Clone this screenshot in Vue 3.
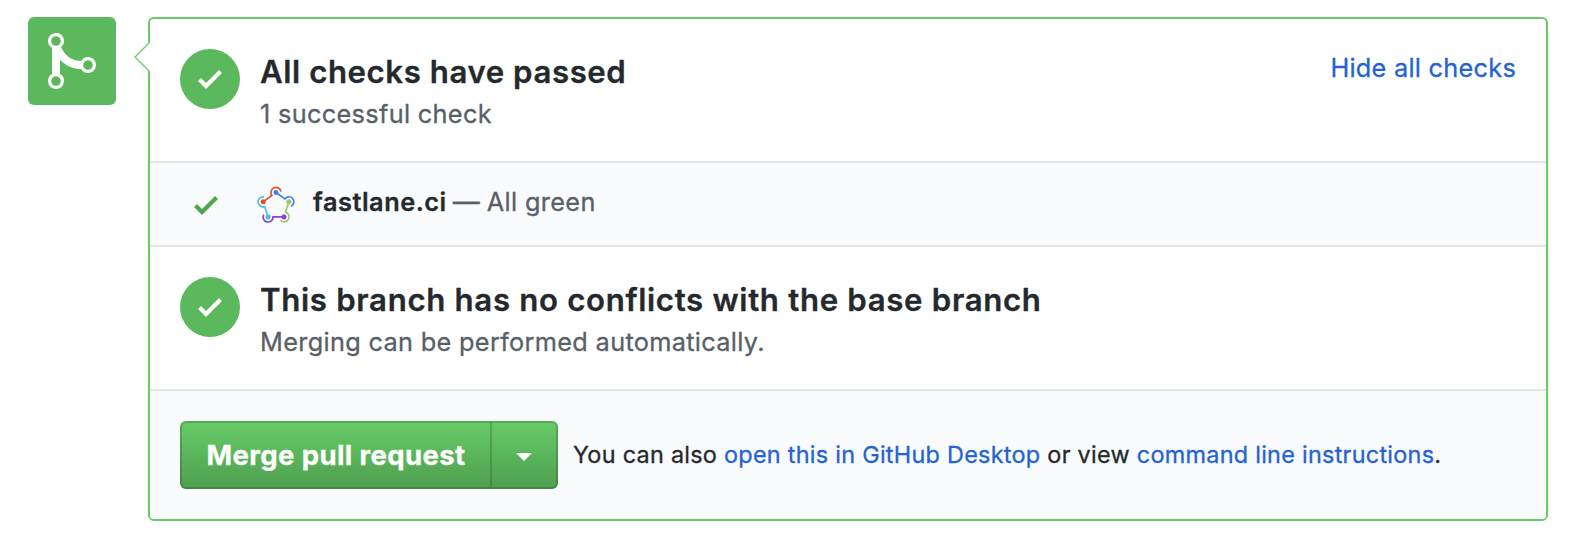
<script setup>
const checkPath = 'M12 5l-8 8-4-4 1.5-1.5L4 10l6.5-6.5z'
const strands = [
  { color: '#e04e2c', angle: 0 },
  { color: '#3b82f6', angle: 72 },
  { color: '#9cca68', angle: 144 },
  { color: '#8b40e2', angle: 216 },
  { color: '#55bdd8', angle: 288 },
]
</script>

<template>
  <main class="page">
    <div class="badge">
      <svg width="48" height="64" viewBox="0 0 12 16" fill="#fff">
        <path fill-rule="evenodd" d="M10 7c-.73 0-1.38.41-1.73 1.02V8C7.22 7.98 6 7.64 5.14 6.98c-.75-.58-1.5-1.61-1.89-2.44A1.993 1.993 0 0 0 2 .99C.89.99 0 1.89 0 3a2 2 0 0 0 1 1.72v6.56c-.59.35-1 .99-1 1.72 0 1.11.89 2 2 2a1.993 1.993 0 0 0 1-3.72V7.67c.67.7 1.44 1.27 2.3 1.69.86.42 2.03.63 2.97.64v-.02c.36.61 1 1.02 1.73 1.02 1.11 0 2-.89 2-2 0-1.11-.89-2-2-2zm-6.8 6c0 .66-.55 1.2-1.2 1.2-.65 0-1.2-.55-1.2-1.2 0-.65.55-1.2 1.2-1.2.65 0 1.2.55 1.2 1.2zM2 4.2C1.34 4.2.8 3.65.8 3c0-.65.55-1.2 1.2-1.2.65 0 1.2.55 1.2 1.2 0 .65-.55 1.2-1.2 1.2zm8 6c-.66 0-1.2-.55-1.2-1.2 0-.65.55-1.2 1.2-1.2.65 0 1.2.55 1.2 1.2 0 .65-.55 1.2-1.2 1.2z" />
      </svg>
    </div>

    <section class="box">
      <svg class="pointer" width="18" height="32" viewBox="0 0 18 32">
        <path d="M18 1.5H15.5L1 16L15.5 30.5H18z" fill="#fff" />
        <path d="M15.5 1.5L1 16L15.5 30.5" fill="none" stroke="#66cc66" stroke-width="1.3" />
      </svg>

      <div class="row status">
        <span class="circle">
          <svg width="24" height="32" viewBox="0 0 12 16" fill="#fff"><path :d="checkPath" /></svg>
        </span>
        <div class="copy">
          <h3 class="title passed">All checks have passed</h3>
          <p class="sub">1 successful check</p>
        </div>
        <a class="toggle">Hide all checks</a>
      </div>

      <div class="row check">
        <svg class="tick" width="24" height="32" viewBox="0 0 12 16" fill="#4fa64f"><path :d="checkPath" /></svg>
        <svg class="logo" width="40" height="40" viewBox="-20 -20 40 40">
          <g v-for="s in strands" :key="s.angle" :transform="`rotate(${s.angle})`">
            <path d="M-12.84 -4.17L-4.05 -10.56A5 5 0 1 1 4.9 -14.3" fill="none" :stroke="s.color" stroke-width="1.7" />
            <circle cx="-12.84" cy="-4.17" r="2.5" :fill="s.color" />
          </g>
        </svg>
        <p class="context"><strong>fastlane.ci</strong><span class="dash">—</span><span class="green">All green</span></p>
      </div>

      <div class="row status">
        <span class="circle">
          <svg width="24" height="32" viewBox="0 0 12 16" fill="#fff"><path :d="checkPath" /></svg>
        </span>
        <div class="copy">
          <h3 class="title">This branch has no conflicts with the base branch</h3>
          <p class="sub">Merging can be performed automatically.</p>
        </div>
      </div>

      <div class="row footer">
        <div class="group">
          <button class="btn merge">Merge pull request</button>
          <button class="btn more" aria-label="Select merge method"><span class="caret"></span></button>
        </div>
        <p class="hint">You can also <a>open this in GitHub Desktop</a> or view <a>command line instructions</a>.</p>
      </div>
    </section>
  </main>
</template>

<style>
body { background: #fff; }
</style>

<style scoped>
.page {
  box-sizing: border-box;
  width: 1572px;
  height: 540px;
  padding: 17px 24px 19px 28px;
  display: flex;
  align-items: flex-start;
  gap: 32px;
  overflow: hidden;
  font-family: Inter, "Liberation Sans", sans-serif;
  font-weight: 400;
  -webkit-text-stroke-width: 0.3px;
  color: #24292e;
}
.badge {
  flex: none;
  width: 88px;
  height: 88px;
  border-radius: 6px;
  background: #5cb85c;
  display: flex;
  align-items: center;
  justify-content: center;
}
.box {
  position: relative;
  box-sizing: border-box;
  flex: 1;
  height: 504px;
  border: 2px solid #66cc66;
  border-radius: 6px;
  background: #fff;
}
.pointer { position: absolute; left: -16px; top: 22px; }
.row {
  box-sizing: border-box;
  display: flex;
  padding: 0 30px;
}
.row + .row { border-top: 2px solid #e1e4e8; }
.status { height: 142px; padding-top: 30px; align-items: flex-start; }
.check + .status { height: 144px; }
.circle {
  flex: none;
  width: 60px;
  height: 60px;
  border-radius: 50%;
  background: #5cb85c;
  display: flex;
  align-items: center;
  justify-content: center;
}
.copy { flex: 1; margin-left: 20px; }
h3, p { margin: 0; white-space: nowrap; }
.title { font-size: 31.2px; line-height: 46px; font-weight: 600; letter-spacing: 0.67px; }
.passed { letter-spacing: 0.57px; }
.sub { margin-top: -2px; font-size: 25.3px; line-height: 42px; letter-spacing: 0.32px; color: #586069; }
.toggle { font-size: 25.3px; line-height: 38px; letter-spacing: 0.26px; color: #2463d1; }
.check { height: 84px; align-items: center; background: #fafbfc; }
.tick { margin: 2px 0 0 14px; }
.logo { margin: 3px 0 0 38px; }
.context { margin-left: 17px; padding-bottom: 4px; font-size: 25.3px; line-height: 36px; color: #586069; }
.context strong { font-weight: 600; letter-spacing: 0.54px; color: #24292e; }
.dash { margin-left: 6px; font-size: 27px; line-height: 1; }
.green { margin-left: 7px; letter-spacing: 0.34px; }
.footer {
  height: 130px;
  align-items: center;
  background: #fafbfc;
  border-radius: 0 0 4px 4px;
}
.group { display: flex; }
.btn {
  box-sizing: border-box;
  height: 68px;
  margin: 0;
  padding: 0;
  display: flex;
  align-items: center;
  justify-content: center;
  border: 2px solid rgba(27, 31, 35, 0.2);
  background: linear-gradient(#66cc66, #4f9f4f) border-box;
  color: #fff;
  font: 700 27.5px/40px Inter, "Liberation Sans", sans-serif;
  letter-spacing: 0.4px;
  white-space: nowrap;
}
.merge { width: 312px; border-radius: 6px 0 0 6px; }
.more { width: 66px; border-left: 0; border-radius: 0 6px 6px 0; }
.caret { border: 8px solid transparent; border-top-color: #fff; border-bottom: 0; margin-top: 4px; }
.hint { margin-left: 15px; font-size: 23.4px; line-height: 36px; letter-spacing: 0.28px; white-space: pre; }
.hint a { color: #2463d1; }
</style>
